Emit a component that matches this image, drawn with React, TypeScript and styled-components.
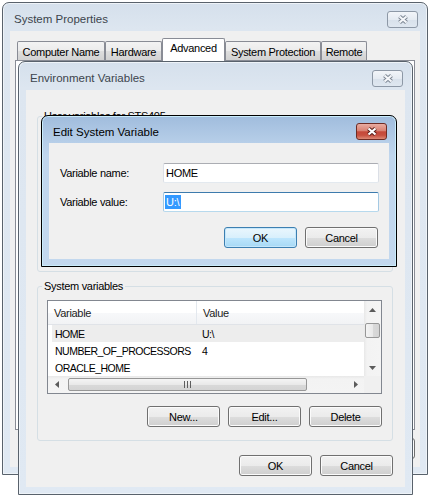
import React from 'react'
import styled, { createGlobalStyle, css } from 'styled-components'

const GlobalStyle = createGlobalStyle`
  html, body {
    margin: 0;
    padding: 0;
    background: #ffffff;
  }
  body {
    font-family: 'Liberation Sans', Arial, sans-serif;
    font-size: 11px;
    letter-spacing: -0.3px;
    color: #000000;
  }
  * {
    box-sizing: border-box;
  }
`

const Desktop = styled.div`
  position: relative;
  width: 431px;
  height: 495px;
  overflow: hidden;
  background: #ffffff;
`

// a window placed on the desktop canvas
const Frame = styled.div<{ $x: number; $y: number; $w: number; $h: number; $z: number; $active?: boolean }>`
  position: absolute;
  left: ${(p) => p.$x}px;
  top: ${(p) => p.$y}px;
  width: ${(p) => p.$w}px;
  height: ${(p) => p.$h}px;
  z-index: ${(p) => p.$z};
  display: flex;
  flex-direction: column;
  padding: 0 7px 7px;
  border-radius: 7px 7px 0 0;
  ${(p) =>
    p.$active
      ? css`
          border: 1px solid #000000;
          background: linear-gradient(#a0bcdd 0px, #b6cee8 26px, #c0d6ed 40px, #c3d8ee 100%);
          box-shadow: inset 0 0 0 1px #c9ecfb;
        `
      : css`
          border: 1px solid #59626c;
          background: linear-gradient(#d5e0ec 0px, #dde6f0 26px, #e0e9f3 100%);
          box-shadow: inset 0 0 0 1px #eef3f8;
        `}
`

const TitleBar = styled.div<{ $h: number }>`
  flex: none;
  height: ${(p) => p.$h}px;
  display: flex;
  align-items: center;
  justify-content: space-between;
  padding: 4px 2px 0 4px;
`

const Title = styled.span<{ $active?: boolean }>`
  font-size: 11.5px;
  letter-spacing: 0;
  color: ${(p) => (p.$active ? '#000000' : '#3c444d')};
`

const CloseButton = styled.div<{ $active?: boolean }>`
  width: 31px;
  height: 17px;
  border-radius: 3px;
  display: flex;
  align-items: center;
  justify-content: center;
  ${(p) =>
    p.$active
      ? css`
          border: 1px solid #6e2c24;
          background: linear-gradient(#e9aca1 0%, #d98273 45%, #c5493a 52%, #c8503f 75%, #dc8a76 100%);
        `
      : css`
          border: 1px solid #8d98a6;
          background: linear-gradient(#f2f5f9 0%, #e5ebf2 50%, #d8e1eb 52%, #dfe7f0 100%);
        `}
`

const Client = styled.div<{ $pad?: string }>`
  flex: 1;
  min-height: 0;
  display: flex;
  flex-direction: column;
  padding: ${(p) => p.$pad || '0'};
  background: #f0f0f0;
`

const TabStrip = styled.div`
  flex: none;
  display: flex;
  align-items: flex-end;
  height: 29px;
  padding: 7px 0 0 7px;
`

const Tab = styled.div<{ $w: number; $selected?: boolean }>`
  width: ${(p) => p.$w}px;
  display: flex;
  align-items: center;
  justify-content: center;
  border: 1px solid #898c95;
  border-bottom: none;
  border-radius: 2px 2px 0 0;
  ${(p) =>
    p.$selected
      ? css`
          position: relative;
          z-index: 1;
          height: 23px;
          margin-bottom: -1px;
          padding-bottom: 4px;
          background: #ffffff;
        `
      : css`
          height: 19px;
          padding-top: 1px;
          background: linear-gradient(#f3f3f3 0%, #ebebeb 50%, #dedede 51%, #d2d2d2 100%);
        `}
`

const TabPanel = styled.div`
  flex: none;
  height: 370px;
  margin: 0 5px;
  border: 1px solid #898c95;
  background: #ffffff;
`

const ButtonRow = styled.div<{ $mt?: number; $pr?: number }>`
  flex: none;
  display: flex;
  justify-content: flex-end;
  gap: 8px;
  margin-top: ${(p) => p.$mt || 0}px;
  padding-right: ${(p) => p.$pr || 0}px;
`

const Button = styled.button<{ $default?: boolean }>`
  width: 73px;
  height: 21px;
  padding: 0;
  font: inherit;
  letter-spacing: inherit;
  color: #000000;
  border-radius: 3px;
  ${(p) =>
    p.$default
      ? css`
          border: 1px solid #3c7fb1;
          background: linear-gradient(#eaf6fd 0%, #d9f0fc 50%, #bee6fd 51%, #a7d9f5 100%);
          box-shadow: inset 0 0 0 1px #c5e7fb;
        `
      : css`
          border: 1px solid #707070;
          background: linear-gradient(#f2f2f2 0%, #ebebeb 50%, #dddddd 51%, #cfcfcf 100%);
          box-shadow: inset 0 0 0 1px #fbfbfb;
        `}
`

const Group = styled.fieldset<{ $h?: number; $mt: number }>`
  flex: none;
  margin: ${(p) => p.$mt}px 0 0;
  padding: 7px 10px 13px 9px;
  min-width: 0;
  ${(p) => p.$h && css`height: ${p.$h}px;`}
  border: 1px solid #d5dfe5;
  border-radius: 3px;
`

const Caption = styled.legend`
  margin-left: -5px;
  padding: 0 2px;
  line-height: 14px;
`

const ListView = styled.div`
  width: 335px;
  height: 94px;
  border: 1px solid #828790;
  background: #ffffff;
  display: grid;
  grid-template-columns: 1fr 17px;
  grid-template-rows: 1fr 17px;
`

const ListBody = styled.div`
  overflow: hidden;
`

const ListHeader = styled.div`
  display: grid;
  grid-template-columns: 149px 1fr;
  height: 24px;
  border-bottom: 1px solid #e0e3e8;
  background: linear-gradient(#ffffff 0%, #ffffff 50%, #f7f8fa 51%, #f2f3f5 100%);
`

const HeaderCell = styled.div<{ $divider?: boolean }>`
  display: flex;
  align-items: center;
  padding-left: 6px;
  color: #1c1c1c;
  ${(p) => p.$divider && css`border-right: 1px solid #e3e8ee;`}
`

const Row = styled.div<{ $selected?: boolean }>`
  display: grid;
  grid-template-columns: 145px 1fr;
  height: 17px;
  margin-left: 4px;
  align-items: center;
  white-space: nowrap;
  font-size: 10.5px;
  letter-spacing: -0.5px;
  background: ${(p) => (p.$selected ? '#ededed' : 'transparent')};
`

const Cell = styled.div<{ $pl: number }>`
  padding-left: ${(p) => p.$pl}px;
`

const VScroll = styled.div`
  display: flex;
  flex-direction: column;
  background: linear-gradient(90deg, #e8e8e8 0px, #f3f3f3 3px, #f4f4f4 100%);
`

const HScroll = styled.div`
  display: flex;
  background: linear-gradient(#e8e8e8 0px, #f3f3f3 3px, #f4f4f4 100%);
`

const ArrowBox = styled.div`
  flex: none;
  width: 17px;
  height: 17px;
  display: flex;
  align-items: center;
  justify-content: center;
`

const Track = styled.div<{ $vertical?: boolean }>`
  flex: 1;
  display: flex;
  flex-direction: ${(p) => (p.$vertical ? 'column' : 'row')};
`

const Thumb = styled.div<{ $vertical?: boolean }>`
  display: flex;
  align-items: center;
  justify-content: center;
  border: 1px solid #979797;
  border-radius: 2px;
  ${(p) =>
    p.$vertical
      ? css`
          width: 15px;
          height: 15px;
          margin: 5px 0 0 1px;
          background: linear-gradient(90deg, #f4f4f4 0%, #e9e9e9 50%, #d9d9d9 51%, #d4d4d4 100%);
        `
      : css`
          width: 239px;
          height: 13px;
          margin: 2px 0 0 3px;
          background: linear-gradient(#f4f4f4 0%, #e9e9e9 50%, #d9d9d9 51%, #d4d4d4 100%);
        `}
`

const Corner = styled.div`
  background: #f0f0f0;
`

const FieldRow = styled.div<{ $mt?: number }>`
  flex: none;
  display: flex;
  align-items: center;
  margin-top: ${(p) => p.$mt || 0}px;
`

const Label = styled.div`
  width: 103px;
`

const TextBox = styled.div<{ $focused?: boolean }>`
  width: 216px;
  height: 20px;
  display: flex;
  align-items: center;
  padding-left: 2px;
  background: #ffffff;
  border: 1px solid;
  border-radius: 2px;
  ${(p) =>
    p.$focused
      ? css`
          border-color: #3d7bad #a4c9e3 #b7d9ed #a4c9e3;
        `
      : css`
          border-color: #abadb3 #dbdfe6 #e3e9ef #dbdfe6;
        `}
`

const Selection = styled.span`
  margin-left: -1px;
  padding: 1px 2px 1px 1px;
  background: #3399ff;
  color: #ffffff;
`

function CloseGlyph({ active }: { active?: boolean }) {
  const d = 'M3.5 2.5 L10.5 8.5 M10.5 2.5 L3.5 8.5'
  return (
    <svg width="14" height="11" viewBox="0 0 14 11">
      <path d={d} stroke={active ? '#5a2019' : '#7d8794'} strokeWidth="4.2" fill="none" />
      <path d={d} stroke={active ? '#ffffff' : '#f5f7fa'} strokeWidth="2.2" fill="none" />
    </svg>
  )
}

function Arrow({ dir }: { dir: 'up' | 'down' | 'left' | 'right' }) {
  const points = {
    up: '0,4 3.5,0 7,4',
    down: '0,0 7,0 3.5,4',
    left: '4,0 4,7 0,3.5',
    right: '0,0 4,3.5 0,7',
  }[dir]
  const vertical = dir === 'up' || dir === 'down'
  return (
    <svg width={vertical ? 7 : 4} height={vertical ? 4 : 7} viewBox={vertical ? '0 0 7 4' : '0 0 4 7'}>
      <polygon points={points} fill="#5b5b5b" />
    </svg>
  )
}

function Grip() {
  return (
    <svg width="7" height="7" viewBox="0 0 7 7">
      <path d="M0.5 0 V7 M3.5 0 V7 M6.5 0 V7" stroke="#5e5e5e" strokeWidth="1" />
    </svg>
  )
}

const systemVars = [
  { name: 'HOME', value: 'U:\\' },
  { name: 'NUMBER_OF_PROCESSORS', value: '4' },
  { name: 'ORACLE_HOME', value: '' },
]

function SystemProperties() {
  return (
    <Frame $x={2} $y={2} $w={426} $h={473} $z={1}>
      <TitleBar $h={28}>
        <Title>System Properties</Title>
        <CloseButton>
          <CloseGlyph />
        </CloseButton>
      </TitleBar>
      <Client>
        <TabStrip>
          <Tab $w={88}>Computer Name</Tab>
          <Tab $w={57}>Hardware</Tab>
          <Tab $w={63} $selected>
            Advanced
          </Tab>
          <Tab $w={96}>System Protection</Tab>
          <Tab $w={46}>Remote</Tab>
        </TabStrip>
        <TabPanel />
        <ButtonRow $mt={8} $pr={5}>
          <Button $default>OK</Button>
          <Button>Cancel</Button>
          <Button>Apply</Button>
        </ButtonRow>
      </Client>
    </Frame>
  )
}

function EnvironmentVariables() {
  return (
    <Frame $x={18} $y={61} $w={395} $h={434} $z={2}>
      <TitleBar $h={28}>
        <Title>Environment Variables</Title>
        <CloseButton>
          <CloseGlyph />
        </CloseButton>
      </TitleBar>
      <Client $pad="0 12px 0 11px">
        <Group $mt={19} $h={163}>
          <Caption>User variables for STS405</Caption>
        </Group>
        <Group $mt={7}>
          <Caption>System variables</Caption>
          <ListView>
            <ListBody>
              <ListHeader>
                <HeaderCell $divider>Variable</HeaderCell>
                <HeaderCell>Value</HeaderCell>
              </ListHeader>
              {systemVars.map((v, i) => (
                <Row key={v.name} $selected={i === 0}>
                  <Cell $pl={3}>{v.name}</Cell>
                  <Cell $pl={5}>{v.value}</Cell>
                </Row>
              ))}
            </ListBody>
            <VScroll>
              <ArrowBox>
                <Arrow dir="up" />
              </ArrowBox>
              <Track $vertical>
                <Thumb $vertical />
              </Track>
              <ArrowBox>
                <Arrow dir="down" />
              </ArrowBox>
            </VScroll>
            <HScroll>
              <ArrowBox>
                <Arrow dir="left" />
              </ArrowBox>
              <Track>
                <Thumb>
                  <Grip />
                </Thumb>
              </Track>
              <ArrowBox>
                <Arrow dir="right" />
              </ArrowBox>
            </HScroll>
            <Corner />
          </ListView>
          <ButtonRow $mt={12}>
            <Button>New...</Button>
            <Button>Edit...</Button>
            <Button>Delete</Button>
          </ButtonRow>
        </Group>
        <ButtonRow $mt={14}>
          <Button>OK</Button>
          <Button>Cancel</Button>
        </ButtonRow>
      </Client>
    </Frame>
  )
}

function EditSystemVariable() {
  return (
    <Frame $x={41} $y={115} $w={356} $h={152} $z={3} $active>
      <TitleBar $h={27}>
        <Title $active>Edit System Variable</Title>
        <CloseButton $active>
          <CloseGlyph active />
        </CloseButton>
      </TitleBar>
      <Client $pad="20px 10px 11px 11px">
        <FieldRow>
          <Label>Variable name:</Label>
          <TextBox>HOME</TextBox>
        </FieldRow>
        <FieldRow $mt={9}>
          <Label>Variable value:</Label>
          <TextBox $focused>
            <Selection>U:\</Selection>
          </TextBox>
        </FieldRow>
        <ButtonRow $mt={15} $pr={1}>
          <Button $default>OK</Button>
          <Button>Cancel</Button>
        </ButtonRow>
      </Client>
    </Frame>
  )
}

export default function App() {
  return (
    <>
      <GlobalStyle />
      <Desktop>
        <SystemProperties />
        <EnvironmentVariables />
        <EditSystemVariable />
      </Desktop>
    </>
  )
}
